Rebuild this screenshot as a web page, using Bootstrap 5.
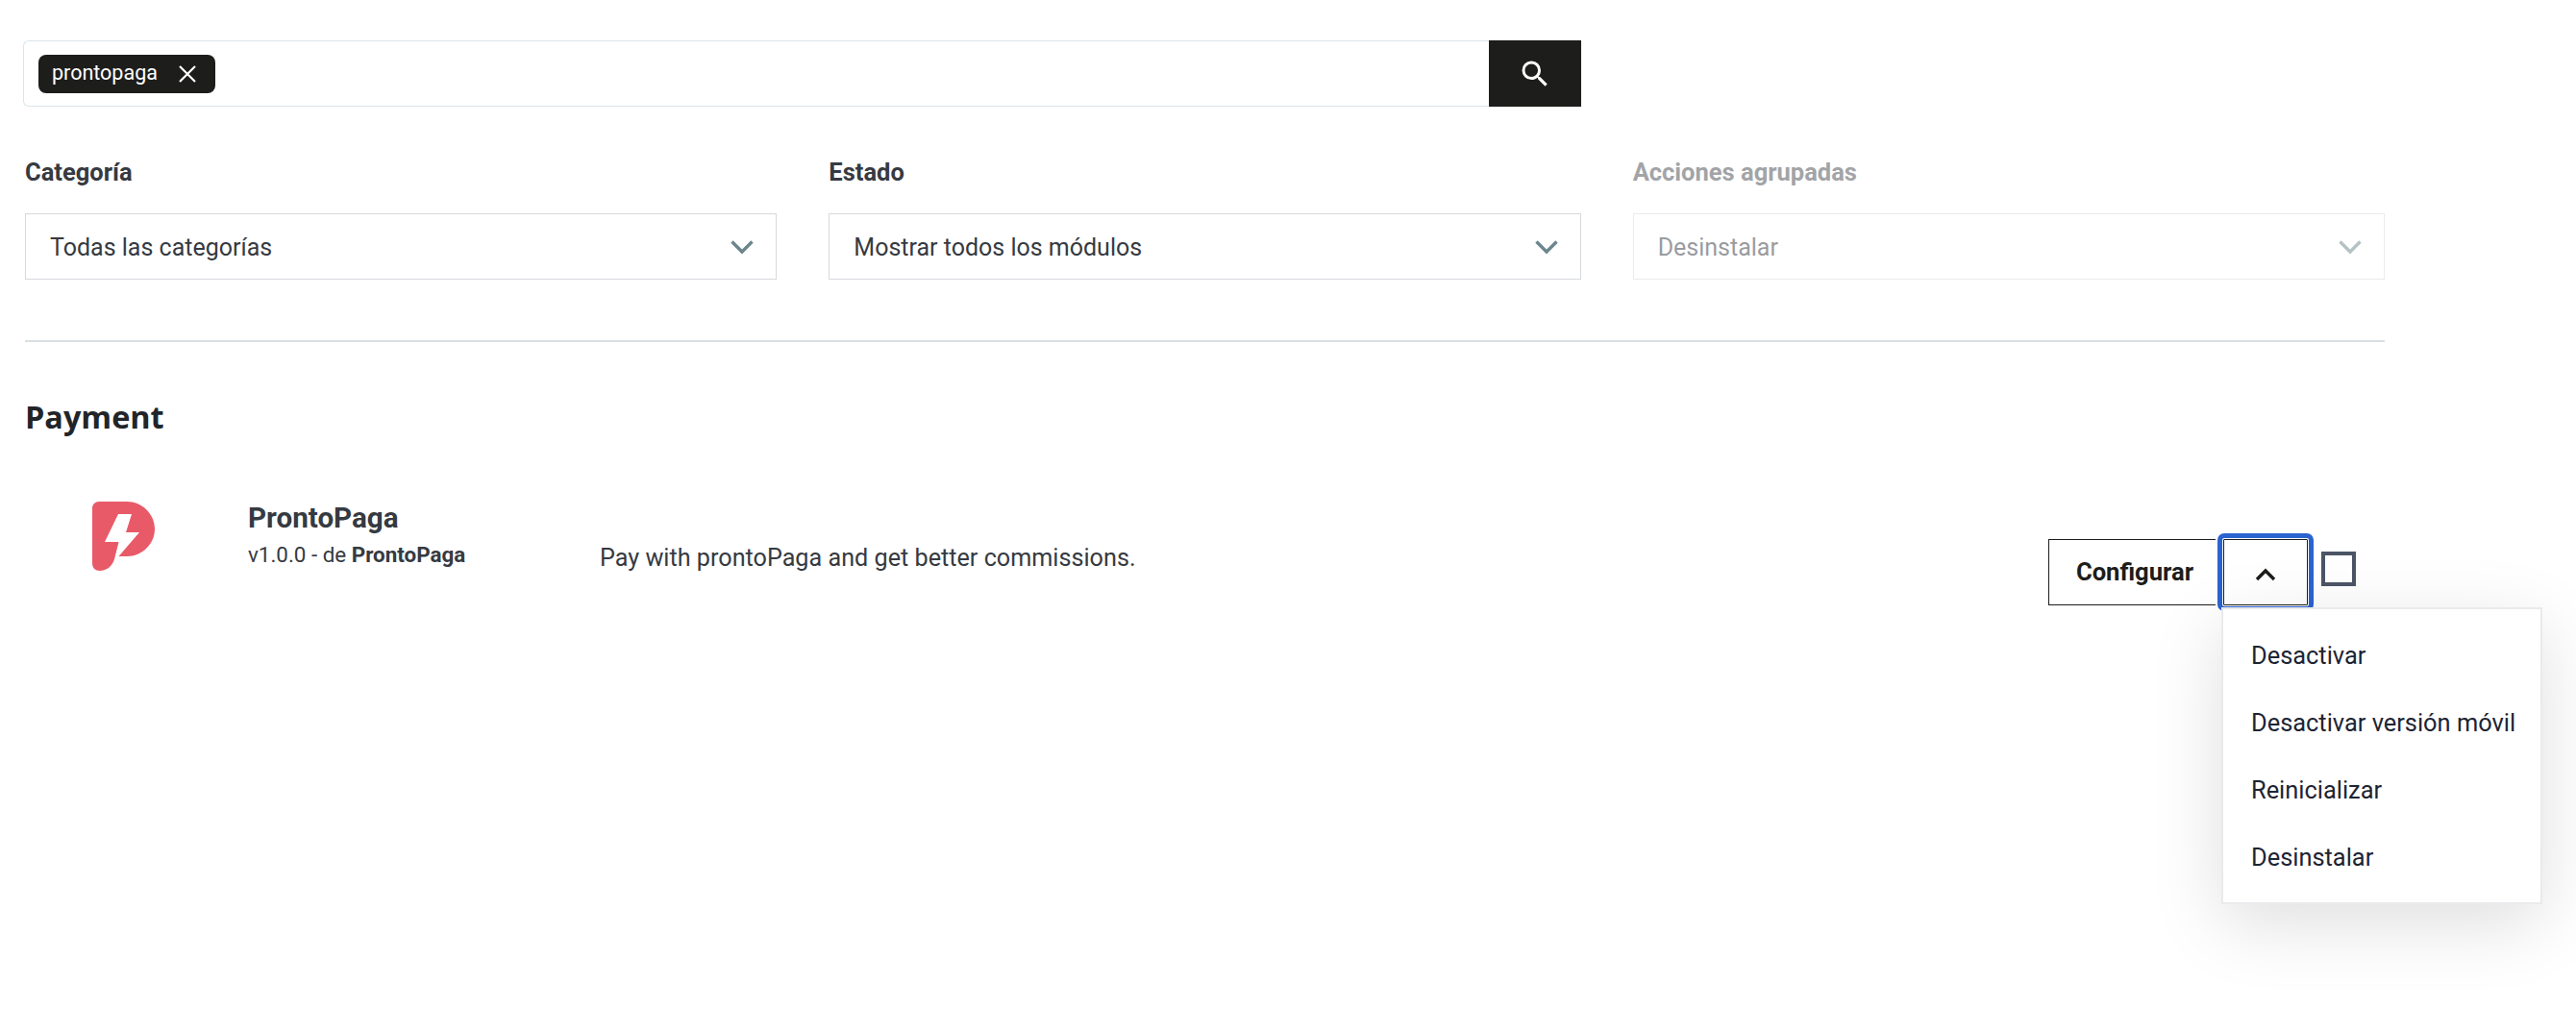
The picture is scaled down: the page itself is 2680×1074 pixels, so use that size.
<!DOCTYPE html>
<html lang="es">
<head>
<meta charset="utf-8">
<title>Módulos</title>
<link href="https://cdn.jsdelivr.net/npm/bootstrap@5.3.0/dist/css/bootstrap.min.css" rel="stylesheet">
<style>
html,body{height:1074px;overflow:hidden;background:#fff}
body{font-family:"Roboto","Liberation Sans",sans-serif;color:#363a41;font-size:24px}
.page-wrap{width:2507px;padding:42px 26px 0}
.filter-row{--bs-gutter-x:54px}
.filter-gap{margin-top:50px}
.search-box{height:69px;margin-left:-2px}
.search-field{border:1px solid #dbe5ec;border-right:0;border-radius:6px 0 0 6px;padding:0 15px;background:#fff}
.search-tag{height:40px;background:#1d1d1b;color:#fff;border-radius:8px;padding:0 19px 0 14px;font-size:21.5px;gap:21px}
.search-btn{width:96px;border-radius:0;background:#1d1d1b;border:0;padding:0}
.filter-label{font-weight:700;font-size:25.5px;line-height:36px;margin:0 0 25px;color:#363a41}
.filter-label.off{color:#a2a4a7}
.pick{height:69px;border:1px solid #d6d9dc;border-radius:0;font-size:25px;line-height:38px;color:#363a41;padding:2px 60px 0 25px;background-size:26px 16px;background-position:right 22px center;background-image:url("data:image/svg+xml,%3Csvg xmlns='http://www.w3.org/2000/svg' viewBox='0 0 26 16'%3E%3Cpath d='M2.5 2.5l10.5 10.5 10.5-10.5' fill='none' stroke='%236c868e' stroke-width='3.4'/%3E%3C/svg%3E")}
.pick:disabled{background-color:#fff;opacity:.5;border-color:#d6d9dc;color:#363a41}
.divider{border-top:2px solid #d8dfe2;opacity:1;margin:63px 0 0}
.section-name{font-family:"Open Sans",sans-serif;font-weight:700;font-size:32.4px;line-height:44px;color:#212529;margin:55px 0 0}
.module-row{margin-top:67px;height:100px;position:relative}
.logo-cell{width:232px;padding-left:70px}
.mod-name{font-weight:700;font-size:29.6px;line-height:34px;color:#363a41;margin:0}
.mod-meta{font-size:22.4px;line-height:30px;color:#363a41;margin:6px 0 0}
.mod-meta b{font-weight:700}
.info-cell{width:366px}
.mod-text{font-size:25.2px;line-height:36px;margin:41px 0 0;color:#363a41}
.action-cell{margin-left:auto;padding-top:39px;padding-right:30px;position:relative}
.cfg-btn{width:174px;height:69px;border:1px solid #1d1d1b;border-right:0;border-radius:0;background:#fff;font-weight:700;font-size:25.6px;color:#1d1d1b;padding:0 0 0 5px}
.more-btn{width:88px;height:69px;margin-left:8px;border:1px solid #1d1d1b;border-radius:1px;background:#fff;padding:5px 0 0;outline:5px solid #2b63cf;outline-offset:1px}
.tick{width:36px;height:36px;border:4px solid #4b5566;margin:13px 0 0 14px;background:#fff}
.more-menu{position:absolute;z-index:5;left:180px;top:110px;width:334px;height:309px;padding:14px 0;border:2px solid #e9eaec;border-radius:0;background:#fff;box-shadow:0 20px 70px rgba(0,0,0,.13)}
.more-item{height:70px;padding:0 29px 2px;font-size:25.4px;color:#1d2433;white-space:nowrap}
</style>
</head>
<body>
<main class="page-wrap">
  <div class="row filter-row">
    <div class="col-8">
      <div class="d-flex search-box">
        <div class="search-field flex-grow-1 d-flex align-items-center">
          <span class="search-tag d-inline-flex align-items-center">prontopaga
            <svg width="20" height="20" viewBox="0 0 20 20"><path d="M2 2l16 16M18 2L2 18" stroke="#fff" stroke-width="2.2" fill="none"/></svg>
          </span>
        </div>
        <button class="btn search-btn d-flex align-items-center justify-content-center" type="button" aria-label="Buscar">
          <svg width="36" height="36" viewBox="0 0 24 24"><path fill="#fff" d="M15.5 14h-.79l-.28-.27A6.47 6.47 0 0 0 16 9.5 6.5 6.5 0 1 0 9.5 16c1.61 0 3.09-.59 4.23-1.57l.27.28v.79l5 4.99L20.49 19l-4.99-5zm-6 0C7.01 14 5 11.99 5 9.5S7.01 5 9.5 5 14 7.01 14 9.5 11.99 14 9.5 14z"/></svg>
        </button>
      </div>
    </div>
  </div>
  <div class="row filter-row filter-gap">
    <div class="col-4">
      <p class="filter-label">Categoría</p>
      <select class="form-select pick"><option>Todas las categorías</option></select>
    </div>
    <div class="col-4">
      <p class="filter-label">Estado</p>
      <select class="form-select pick"><option>Mostrar todos los módulos</option></select>
    </div>
    <div class="col-4">
      <p class="filter-label off">Acciones agrupadas</p>
      <select class="form-select pick" disabled><option>Desinstalar</option></select>
    </div>
  </div>
  <hr class="divider">
  <h2 class="section-name">Payment</h2>
  <div class="d-flex module-row">
    <div class="logo-cell">
      <svg width="65" height="72" viewBox="0 0 65 72"><path fill="#e85a68" d="M7 0H36C52 0 65 13 65 28.5C65 44 52 57 36 57H27.5L49 32H35L41 13H27L13 42H27.5L23 60C21 67 15 72 8 72C3 72 0 69 0 64V7C0 3 3 0 7 0Z"/></svg>
    </div>
    <div class="info-cell">
      <p class="mod-name">ProntoPaga</p>
      <p class="mod-meta">v1.0.0 - de <b>ProntoPaga</b></p>
    </div>
    <div><p class="mod-text">Pay with prontoPaga and get better commissions.</p></div>
    <div class="action-cell d-flex align-items-start">
      <button class="btn cfg-btn" type="button">Configurar</button>
      <button class="btn more-btn d-flex align-items-center justify-content-center" type="button" aria-label="Más">
        <svg width="22" height="14" viewBox="0 0 22 14"><path d="M2 12l9-9 9 9" fill="none" stroke="#1d1d1b" stroke-width="3.4"/></svg>
      </button>
      <div class="tick"></div>
      <div class="more-menu">
        <div class="more-item d-flex align-items-center">Desactivar</div>
        <div class="more-item d-flex align-items-center">Desactivar versión móvil</div>
        <div class="more-item d-flex align-items-center">Reinicializar</div>
        <div class="more-item d-flex align-items-center">Desinstalar</div>
      </div>
    </div>
  </div>
</main>
</body>
</html>
